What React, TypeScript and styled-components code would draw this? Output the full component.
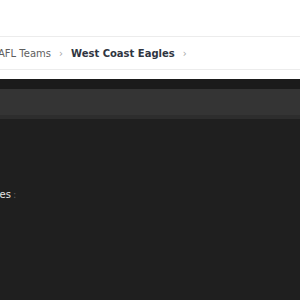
import React from "react";
import styled, { createGlobalStyle } from "styled-components";

const Global = createGlobalStyle`
  html, body { margin: 0; padding: 0; background: #ffffff; }
  body { font-family: "DejaVu Sans", "Liberation Sans", sans-serif; }
  #root { height: 300px; overflow: hidden; }
`;

const Page = styled.div`
  display: flex;
  flex-direction: column;
  height: 300px;
  overflow: hidden;
`;

const TopSpace = styled.div`
  height: 36px;
  flex: none;
`;

const Crumbs = styled.nav`
  flex: none;
  height: 32px;
  border-top: 1px solid #ececec;
  border-bottom: 1px solid #ececec;
  display: flex;
  align-items: center;
  gap: 8px;
  margin-bottom: 9px;
  overflow: hidden;
  white-space: nowrap;
  font-size: 10px;
`;

const CrumbList = styled.div`
  display: flex;
  align-items: center;
  gap: 8px;
  margin-left: -2px;
`;

const Crumb = styled.span<{ $current?: boolean }>`
  color: ${(p) => (p.$current ? "#2f3541" : "#5e5e5e")};
  font-weight: ${(p) => (p.$current ? 700 : 400)};
`;

const Sep = styled.span`
  color: #a6a6a6;
  font-size: 10px;
`;

const Dark = styled.section`
  flex: 1;
  background: #1f1f1f;
  display: flex;
  flex-direction: column;
`;

const Strip = styled.div`
  height: 10px;
  background: #1b1b1b;
`;

const Toolbar = styled.div`
  height: 26px;
  background: #343434;
  border-bottom: 4px solid #2d2d2d;
`;

const Body = styled.div`
  padding-top: 69px;
  display: flex;
  align-items: center;
  font-size: 10px;
  line-height: 13px;
`;

const TitleClip = styled.div`
  width: 11px;
  overflow: hidden;
  display: flex;
  justify-content: flex-end;
  white-space: nowrap;
  color: #e6e6e6;
`;

const Trail = styled.span`
  color: #5a5a5a;
  margin-left: 2px;
`;

export default function App() {
  return (
    <>
      <Global />
      <Page>
        <TopSpace />
        <Crumbs>
          <CrumbList>
            <Crumb>AFL Teams</Crumb>
            <Sep>›</Sep>
            <Crumb $current>West Coast Eagles</Crumb>
            <Sep>›</Sep>
          </CrumbList>
        </Crumbs>
        <Dark>
          <Strip />
          <Toolbar />
          <Body>
            <TitleClip>West Coast Eagles</TitleClip>
            <Trail>:</Trail>
          </Body>
        </Dark>
      </Page>
    </>
  );
}
